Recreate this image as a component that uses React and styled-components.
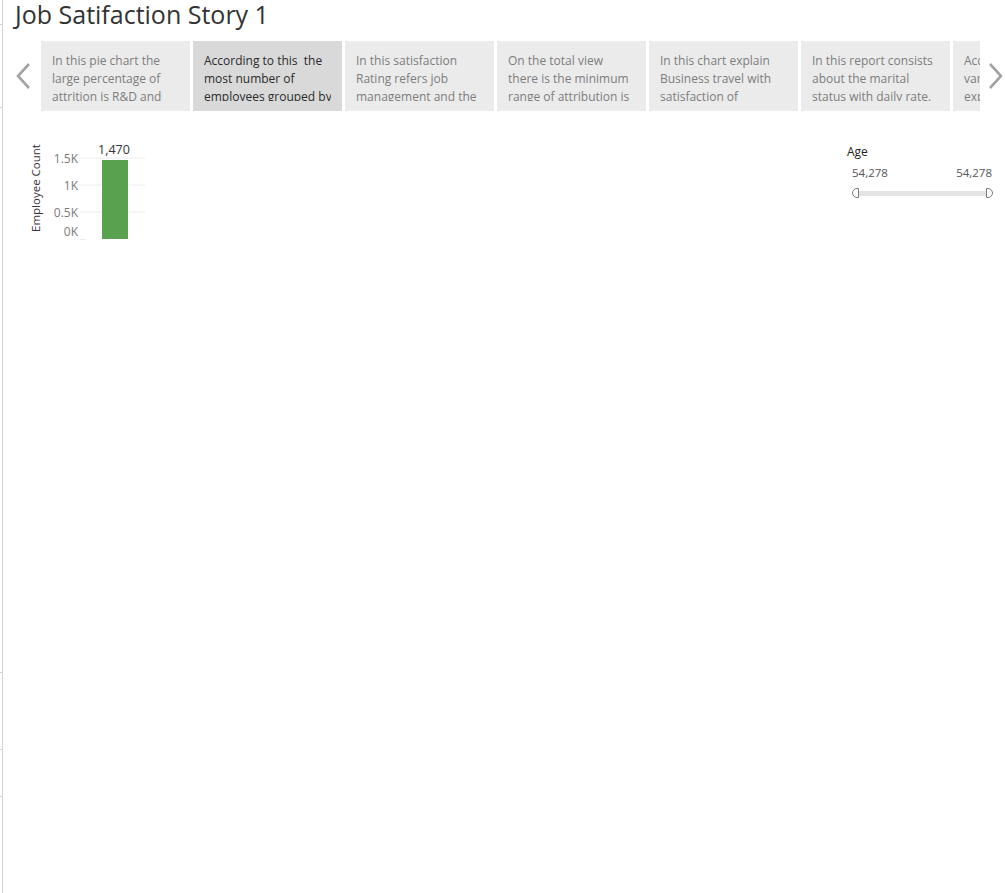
import React from 'react';
import styled, { createGlobalStyle } from 'styled-components';

const GlobalStyle = createGlobalStyle`
  html, body {
    margin: 0;
    padding: 0;
    background: #fff;
  }
  body {
    font-family: "Open Sans", "Liberation Sans", sans-serif;
    color: #333;
  }
`;

const stories = [
  { lines: ['In this pie chart the', 'large percentage of', 'attrition is R&D and'] },
  { lines: ['According to this  the', 'most number of', 'employees grouped by'], active: true },
  { lines: ['In this satisfaction', 'Rating refers job', 'management and the'] },
  { lines: ['On the total view', 'there is the minimum', 'range of attribution is'] },
  { lines: ['In this chart explain', 'Business travel with', 'satisfaction of'] },
  { lines: ['In this report consists', 'about the marital', 'status with daily rate.'] },
  { lines: ['According to the', 'various', 'experience'] },
];

// distances between the little ticks on the left rail
const railSegments = [25, 83, 565, 77, 47];

const ticks = [
  { label: '1.5K', y: 20 },
  { label: '1K', y: 47 },
  { label: '0.5K', y: 74 },
];

const Chevron = ({ dir }) => (
  <svg width="16" height="30" viewBox="0 0 16 30">
    <polyline
      points={dir === 'left' ? '14,3 3,15 14,27' : '2,3 13,15 2,27'}
      fill="none"
      stroke="#a3a3a3"
      strokeWidth="2.6"
    />
  </svg>
);

const BarChart = () => (
  <svg width="125" height="106" viewBox="0 0 125 106">
    <text
      x="9"
      y="50"
      transform="rotate(-90 9 50)"
      textAnchor="middle"
      dominantBaseline="central"
      fontSize="11.5"
      fill="#3a2f3a"
      fontFamily="Open Sans, sans-serif"
    >
      Employee Count
    </text>
    {ticks.map((t) => (
      <g key={t.label}>
        <line x1="54" x2="119" y1={t.y} y2={t.y} stroke="#ececec" strokeWidth="1" />
        <text
          x="52"
          y={t.y}
          textAnchor="end"
          dominantBaseline="central"
          fontSize="12"
          fill="#7a7a7a"
          fontFamily="Open Sans, sans-serif"
        >
          {t.label}
        </text>
      </g>
    ))}
    <text
      x="52"
      y="93"
      textAnchor="end"
      dominantBaseline="central"
      fontSize="12"
      fill="#7a7a7a"
      fontFamily="Open Sans, sans-serif"
    >
      0K
    </text>
    <line x1="54" x2="60" y1="101.5" y2="101.5" stroke="#ececec" strokeWidth="1" />
    <rect x="76" y="22" width="26" height="79" fill="#59a14f" />
    <text
      x="88"
      y="11"
      textAnchor="middle"
      dominantBaseline="central"
      fontSize="12.5"
      fill="#333"
      fontFamily="Open Sans, sans-serif"
    >
      1,470
    </text>
  </svg>
);

const App = () => {
  return (
    <>
      <GlobalStyle />
      <Page>
        <Rail>
          {railSegments.map((h, i) => (
            <RailSegment key={i} $h={h} />
          ))}
        </Rail>
        <Main>
          <Title>Job Satifaction Story 1</Title>
          <Nav>
            <ArrowCell>
              <Chevron dir="left" />
            </ArrowCell>
            <Strip>
              {stories.map((s, i) => (
                <Card key={i} $active={s.active}>
                  <CardText>{s.lines.join('\n')}</CardText>
                </Card>
              ))}
            </Strip>
            <ArrowCell $right>
              <Chevron dir="right" />
            </ArrowCell>
          </Nav>
          <Body>
            <ChartBlock>
              <BarChart />
            </ChartBlock>
            <Filter>
              <FilterTitle>Age</FilterTitle>
              <Values>
                <span>54,278</span>
                <span>54,278</span>
              </Values>
              <Slider>
                <Handle />
                <Track />
                <Handle $right />
              </Slider>
            </Filter>
          </Body>
        </Main>
      </Page>
    </>
  );
};

const Page = styled.div`
  display: flex;
  min-height: 100vh;
`;

const Rail = styled.div`
  width: 2px;
  flex: 0 0 2px;
  border-right: 1px solid #d4d4d4;
  display: flex;
  flex-direction: column;
`;

const RailSegment = styled.div`
  height: ${(p) => p.$h}px;
  box-sizing: border-box;
  border-bottom: 1px solid #d4d4d4;
`;

const Main = styled.div`
  flex: 1;
  min-width: 0;
`;

const Title = styled.h1`
  margin: 0;
  padding-left: 12px;
  font-size: 25px;
  line-height: 28px;
  font-weight: 400;
  color: #333;
`;

const Nav = styled.div`
  display: flex;
  margin-top: 13px;
  height: 70px;
`;

const ArrowCell = styled.div`
  box-sizing: border-box;
  display: flex;
  align-items: center;
  justify-content: ${(p) => (p.$right ? 'flex-start' : 'center')};
  flex: ${(p) => (p.$right ? '1' : '0 0 38px')};
  padding-left: ${(p) => (p.$right ? '8px' : '2px')};
`;

const Strip = styled.div`
  display: flex;
  gap: 3px;
  width: 939px;
  flex: 0 0 939px;
  overflow: hidden;
`;

const Card = styled.div`
  flex: 0 0 149px;
  box-sizing: border-box;
  height: 70px;
  padding: 11px 11px 0;
  background: ${(p) => (p.$active ? '#d9d9d9' : '#ebebeb')};
  color: ${(p) => (p.$active ? '#2b2b2b' : '#7d7d7d')};
  overflow: hidden;
`;

const CardText = styled.div`
  font-size: 12px;
  line-height: 18px;
  height: 49px;
  overflow: hidden;
  white-space: pre;
`;

const Body = styled.div`
  display: flex;
  justify-content: space-between;
  align-items: flex-start;
`;

const ChartBlock = styled.div`
  margin-top: 27px;
  padding-left: 23px;
  line-height: 0;
`;

const Filter = styled.div`
  width: 148px;
  margin-top: 33px;
  margin-right: 10px;
  display: flex;
  flex-direction: column;
`;

const FilterTitle = styled.div`
  font-size: 12px;
  line-height: 16px;
  font-weight: 500;
  color: #222;
`;

const Values = styled.div`
  display: flex;
  justify-content: space-between;
  margin-top: 6px;
  padding: 0 3px 0 5px;
  font-size: 11.5px;
  line-height: 14px;
  color: #555;
`;

const Slider = styled.div`
  display: flex;
  align-items: center;
  margin-top: 8px;
  padding: 0 2px 0 5px;
  height: 10px;
`;

const Handle = styled.div`
  width: 7px;
  height: 10px;
  box-sizing: border-box;
  border: 1px solid #7a7a7a;
  background: #fff;
  border-radius: ${(p) => (p.$right ? '0 5px 5px 0' : '5px 0 0 5px')};
  flex: 0 0 7px;
`;

const Track = styled.div`
  flex: 1;
  height: 5px;
  background: #e4e4e4;
`;

export default App;
